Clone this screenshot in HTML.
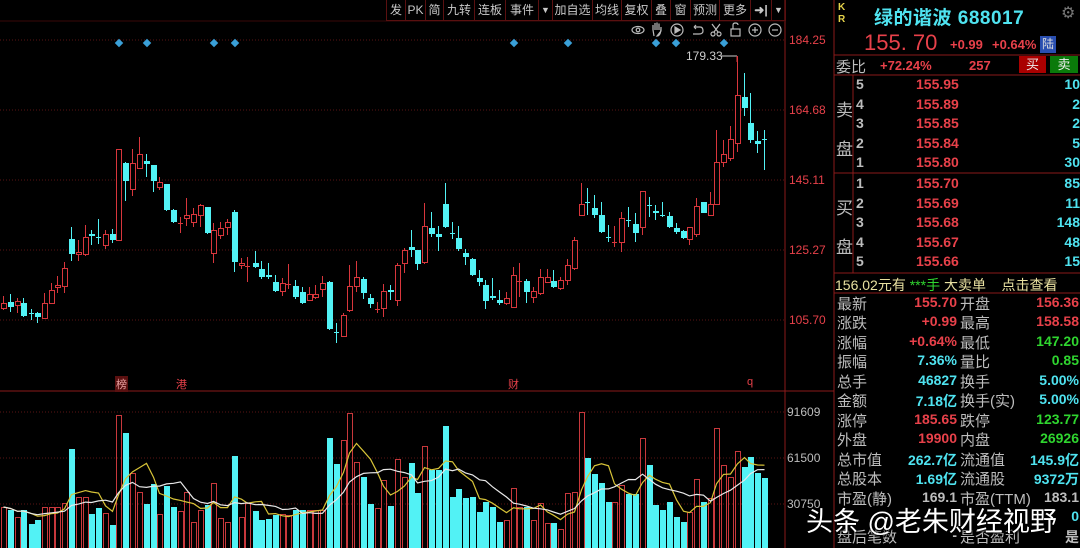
<!DOCTYPE html>
<html><head><meta charset="utf-8"><style>
*{margin:0;padding:0;box-sizing:border-box}
body{width:1080px;height:548px;background:#000;overflow:hidden;position:relative;font-family:"Liberation Sans","Noto Sans CJK SC",sans-serif;}
.a{position:absolute;white-space:nowrap}
.tb{position:absolute;top:0;height:21px;border-right:1px solid #5a1010;color:#c8c8c8;font-size:12px;line-height:21px;text-align:center}
.g{color:#bdbdbd}.r{color:#e8414a}.c{color:#4fe3f0}.gr{color:#2fd52f}
.n{font-weight:bold;font-size:14px}
</style></head><body>
<svg id="s" width="1080" height="548" style="position:absolute;left:0;top:0"></svg>

<div class="a" style="left:386px;top:0;width:400px;height:21px;border-left:1px solid #5a1010;border-bottom:1px solid #5a1010"></div>
<div class="tb" style="left:387px;width:19px">发</div>
<div class="tb" style="left:406px;width:20px">PK</div>
<div class="tb" style="left:426px;width:18px">简</div>
<div class="tb" style="left:444px;width:31px">九转</div>
<div class="tb" style="left:475px;width:31px">连板</div>
<div class="tb" style="left:506px;width:33px">事件</div>
<div class="tb" style="left:539px;width:14px;font-size:9px">▼</div>
<div class="tb" style="left:553px;width:40px">加自选</div>
<div class="tb" style="left:593px;width:29px">均线</div>
<div class="tb" style="left:622px;width:30px">复权</div>
<div class="tb" style="left:652px;width:19px">叠</div>
<div class="tb" style="left:671px;width:20px">窗</div>
<div class="tb" style="left:691px;width:29px">预测</div>
<div class="tb" style="left:720px;width:31px">更多</div>
<div class="tb" style="left:751px;width:21px;font-weight:bold">➜|</div>
<div class="tb" style="left:772px;width:14px;font-size:9px">▼</div>

<div class="a r" style="left:789px;top:33px;font-size:12px">184.25</div>
<div class="a r" style="left:789px;top:103px;font-size:12px">164.68</div>
<div class="a r" style="left:789px;top:173px;font-size:12px">145.11</div>
<div class="a r" style="left:789px;top:243px;font-size:12px">125.27</div>
<div class="a r" style="left:789px;top:313px;font-size:12px">105.70</div>
<div class="a g" style="left:787px;top:405px;font-size:12px">91609</div>
<div class="a g" style="left:787px;top:451px;font-size:12px">61500</div>
<div class="a g" style="left:787px;top:497px;font-size:12px">30750</div>
<div class="a" style="left:686px;top:49px;font-size:12px;color:#ccc">179.33</div>

<div class="a" style="left:115px;top:376px;font-size:11px;color:#e8a0a0;background:#5a1010;padding:0 1px">榜</div>
<div class="a r" style="left:176px;top:376px;font-size:11px">港</div>
<div class="a r" style="left:508px;top:376px;font-size:11px">财</div>
<div class="a r" style="left:747px;top:376px;font-size:11px">q</div>

<div class="a" style="left:838px;top:2px;color:#e6d34a;font-size:10px;font-weight:bold;line-height:12px">K<br>R</div>
<div class="a c" style="left:874px;top:3px;font-size:19px;font-weight:bold;letter-spacing:0.5px">绿的谐波 688017</div>
<div class="a" style="left:1061px;top:3px;color:#777;font-size:16px">⚙</div>
<div class="a r" style="left:864px;top:30px;font-size:22px">155. 70</div>
<div class="a r n" style="left:950px;top:37px;font-size:13px">+0.99</div>
<div class="a r n" style="left:992px;top:37px;font-size:13px">+0.64%</div>
<div class="a" style="left:1040px;top:36px;width:16px;height:17px;background:#2a4fb0;color:#ddd;font-size:12px;text-align:center;line-height:17px">陆</div>
<div class="a g" style="left:836px;top:56px;font-size:15px">委比</div>
<div class="a r n" style="left:880px;top:58px;font-size:13px">+72.24%</div>
<div class="a r n" style="left:969px;top:58px;font-size:13px">257</div>
<div class="a" style="left:1019px;top:56px;width:27px;height:17px;background:#a00;color:#eee;font-size:13px;text-align:center;line-height:17px">买</div>
<div class="a" style="left:1050px;top:56px;width:28px;height:17px;background:#0a7a0a;color:#eee;font-size:13px;text-align:center;line-height:17px">卖</div>
<div class="a g" style="left:836px;top:96px;font-size:17px">卖</div>
<div class="a g" style="left:836px;top:135px;font-size:17px">盘</div>
<div class="a g" style="left:836px;top:194px;font-size:17px">买</div>
<div class="a g" style="left:836px;top:233px;font-size:17px">盘</div>
<div id="book"></div>
<div class="a" style="left:835px;top:275px;font-size:14px;color:#e8e0a0">156.02元有 <span class="gr">***手</span> 大卖单 &nbsp;&nbsp; 点击查看</div>

<div class="a" style="left:806px;top:500px;font-size:27px;color:#fff;text-shadow:1px 1px 2px #000,0 0 3px #000">头条 @老朱财经视野</div>

<script>
const S=document.getElementById('s');let h='';
const R='#d8363c',C='#52f2f5';
h+=`<line x1="785" y1="0" x2="785" y2="548" stroke="#8a1a1a"/>`;
h+=`<line x1="834" y1="0" x2="834" y2="548" stroke="#8a1a1a"/>`;
h+=`<line x1="0" y1="391" x2="834" y2="391" stroke="#8a1a1a"/>`;
h+=`<line x1="0" y1="21" x2="785" y2="21" stroke="#3a0808"/>`;
[40,110,180,250,320,412,458,504].forEach(y=>h+=`<line x1="0" y1="${y}" x2="785" y2="${y}" stroke="#5a1414" stroke-dasharray="1 2"/>`);
[[834,55],[834,75],[853,173],[834,273],[834,293]].forEach(([x,y])=>h+=`<line x1="${x}" y1="${y}" x2="1080" y2="${y}" stroke="#8a1a1a"/>`);
h+=`<line x1="853" y1="75" x2="853" y2="273" stroke="#8a1a1a"/>`;
h+=`<line x1="834" y1="173" x2="1080" y2="173" stroke="#8a1a1a"/>`;
[119,147,214,235,514,568,656,676,724].forEach(x=>h+=`<rect x="${x-3}" y="40" width="6" height="6" fill="#3aa0d8" transform="rotate(45 ${x} 43)"/>`);
h+=`<line x1="721" y1="56" x2="737" y2="56" stroke="#ccc"/><line x1="737" y1="56" x2="737" y2="62" stroke="${R}"/>`;
const ic='#bbb';
h+=`<g fill="none" stroke="${ic}" stroke-width="1.2">
<ellipse cx="638" cy="30" rx="6" ry="3.5"/><circle cx="638" cy="30" r="1.8"/>
<path d="M654 36 L653 30 L653 25 M655 30 V23 M657 30 V22.5 M659 30 V23.5 M661 31 V27 Q661 36 657 36 Z"/>
<circle cx="677" cy="30" r="6"/><path d="M675 27 L680 30 L675 33 Z" fill="${ic}"/>
<path d="M694 27 H700 Q703 27 703 31 Q703 34 699 34 H693 M694 27 L696 25 M694 27 L696 29"/>
<circle cx="713" cy="34" r="2"/><circle cx="719" cy="34" r="2"/><path d="M714 32 L720 24 M718 32 L712 24"/>
<rect x="731" y="29" width="9" height="7"/><path d="M733 29 V25 Q733 23 735.5 23 Q738 23 738 25"/>
<circle cx="755" cy="30" r="6"/><path d="M752 30 H758 M755 27 V33"/>
<circle cx="775" cy="30" r="6"/><path d="M772 30 H778"/></g>`;
const K=[[3,'r',303,308,296,310],[10,'c',302,307,294,312],[17,'r',301,305,298,313],[23,'c',303,316,298,317],[31,'c',313,314,309,320],[37,'c',313,317,312,323],[44,'r',303,318,293,319],[51,'r',290,303,283,304],[57,'r',285,287,276,293],[64,'r',268,286,262,293],[71,'c',239,254,227,261],[78,'r',252,254,240,261],[85,'r',237,254,225,256],[91,'c',234,236,230,245],[98,'c',237,238,219,244],[105,'r',234,245,230,249],[112,'c',234,240,229,243],[118,'r',149,240,149,240],[125,'c',163,181,162,201],[132,'r',163,189,149,196],[139,'r',154,168,137,168],[146,'c',161,164,154,177],[153,'c',165,181,165,192],[159,'r',182,187,177,190],[166,'c',184,210,184,211],[173,'c',210,222,209,223],[180,'r',223,224,217,233],[186,'r',215,218,198,226],[193,'r',214,222,208,227],[200,'r',205,215,204,227],[207,'c',207,233,207,234],[213,'r',230,253,223,263],[220,'r',228,235,222,239],[227,'r',222,227,219,235],[234,'c',212,262,210,272],[241,'r',263,265,258,269],[247,'r',266,267,257,282],[255,'c',263,267,251,268],[261,'c',269,277,261,279],[268,'c',275,277,263,279],[275,'c',282,291,275,292],[282,'r',283,291,278,296],[288,'r',284,285,264,289],[295,'c',286,297,280,299],[302,'c',292,303,287,304],[309,'r',294,300,287,301],[315,'r',294,297,285,299],[322,'r',283,289,276,297],[329,'c',282,329,281,330],[336,'c',332,333,323,343],[343,'r',315,336,313,337],[349,'r',286,310,265,312],[356,'r',277,286,261,292],[363,'c',279,293,277,299],[370,'c',298,304,294,308],[377,'r',309,310,302,313],[383,'r',291,308,284,317],[390,'c',290,292,285,300],[397,'r',265,300,263,306],
[404,'r',250,263,248,273],[411,'c',247,250,230,257],[417,'c',250,264,250,270],[424,'r',226,262,203,264],[431,'c',228,234,212,237],[438,'c',234,237,226,251],[445,'c',204,227,183,228],[452,'c',233,234,222,239],[458,'c',238,249,226,251],[465,'c',253,257,249,265],[472,'c',259,275,258,276],[479,'c',278,282,270,286],[485,'c',285,301,280,309],[492,'c',296,298,278,300],[499,'c',300,303,290,305],[506,'r',298,303,292,305],[513,'r',275,307,267,307],[519,'r',281,282,263,297],[526,'c',281,292,279,303],[533,'r',291,297,287,303],[540,'r',277,293,269,295],[547,'r',277,282,269,283],[553,'c',281,287,270,288],[560,'r',280,288,277,290],[567,'r',265,280,259,285],[574,'r',240,268,237,270],[581,'r',204,215,183,215],[587,'c',202,203,188,215],[594,'c',208,215,195,218],[601,'c',215,232,202,233],[608,'c',237,238,225,242],[614,'r',242,243,226,247],[621,'r',218,242,212,252],[628,'c',220,221,207,227],[635,'c',224,233,213,242],[642,'r',191,227,191,235],[649,'c',205,206,197,217],[655,'c',211,213,205,220],[662,'c',215,216,202,217],[669,'c',216,227,212,228],[676,'c',228,232,223,234],[683,'c',231,238,230,239],[689,'r',227,239,227,245],[696,'r',206,234,198,237],[703,'c',202,213,202,213],[710,'r',204,215,192,216],[716,'r',162,204,130,204],[723,'r',154,162,140,167],[730,'r',139,158,126,161],[737,'r',95,143,56,152],[744,'c',97,108,73,116],[750,'c',123,140,93,143],[757,'c',141,144,131,153],[764,'c',139,140,130,170]];
const V=[507,510,517,510,524,520,507,507,507,503,449,497,497,514,508,513,525,415,433,473,492,504,484,514,486,507,511,492,522,510,505,483,518,522,456,517,503,511,520,519,515,514,515,510,510,510,510,510,438,464,440,413,462,477,504,508,480,506,459,477,463,493,446,470,470,426,497,489,498,497,512,502,507,522,520,488,507,507,520,503,523,523,529,493,492,412,458,474,483,502,502,485,494,494,438,465,505,510,502,517,522,512,479,502,498,428,465,477,451,467,457,473,478];
let vol='',cand='';
K.forEach((k,i)=>{const [x,t,a,b,hi,lo]=k;const col=t=='r'?R:C;
 cand+=`<line x1="${x+.5}" y1="${hi}" x2="${x+.5}" y2="${lo}" stroke="${col}"/>`;
 if(b-a<2) cand+=`<line x1="${x-2}" y1="${a+.5}" x2="${x+3}" y2="${a+.5}" stroke="${col}"/>`;
 else if(t=='r') cand+=`<rect x="${x-1.5}" y="${a+.5}" width="5" height="${b-a}" fill="#000" stroke="${col}"/>`;
 else cand+=`<rect x="${x-2}" y="${a}" width="6" height="${b-a}" fill="${col}"/>`;
 const v=V[i]||510;
 if(t=='r') vol+=`<rect x="${x-1.5}" y="${v+.5}" width="5" height="${548-v}" fill="none" stroke="#c8383c"/>`;
 else vol+=`<rect x="${x-2}" y="${v}" width="6" height="${548-v}" fill="${col}"/>`;
});
h+=cand+vol;
function ma(n,col){let p=[];for(let i=0;i<K.length;i++){let s=0,c=0;for(let j=Math.max(0,i-n+1);j<=i;j++){s+=548-V[j];c++}p.push(K[i][0]+.5+','+(548-s/c).toFixed(1))}h+=`<polyline points="${p.join(' ')}" fill="none" stroke="${col}" stroke-width="1.2"/>`}
ma(5,'#d8c438');ma(10,'#e8e8e8');
S.innerHTML=h;
const sell=[['5','155.95','10'],['4','155.89','2'],['3','155.85','2'],['2','155.84','5'],['1','155.80','30']];
const buy=[['1','155.70','85'],['2','155.69','11'],['3','155.68','148'],['4','155.67','48'],['5','155.66','15']];
let b='';
function row(r,y){b+=`<div class="a g n" style="left:856px;top:${y}px">${r[0]}</div><div class="a r n" style="left:916px;top:${y}px">${r[1]}</div><div class="a c n" style="right:0;top:${y}px">${r[2]}</div>`}
sell.forEach((r,i)=>row(r,76+i*19.5));buy.forEach((r,i)=>row(r,175+i*19.5));
const info=[['最新','155.70','r','开盘','156.36','r'],['涨跌','+0.99','r','最高','158.58','r'],['涨幅','+0.64%','r','最低','147.20','gr'],['振幅','7.36%','c','量比','0.85','gr'],['总手','46827','c','换手','5.00%','c'],['金额','7.18亿','c','换手(实)','5.00%','c'],['涨停','185.65','r','跌停','123.77','gr'],['外盘','19900','r','内盘','26926','gr'],['总市值','262.7亿','c','流通值','145.9亿','c'],['总股本','1.69亿','c','流通股','9372万','c'],['市盈(静)','169.1','g','市盈(TTM)','183.1','g'],['','','g','','0','c'],['盘后笔数','-','g','是否盈利','是','g']];
info.forEach((r,i)=>{const y=293+i*19.45;
 b+=`<div class="a g" style="left:837px;top:${y}px;font-size:15px">${r[0]}</div><div class="a ${r[2]} n" style="right:123px;top:${y+1}px">${r[1]}</div><div class="a g" style="left:960px;top:${y}px;font-size:15px">${r[3]}</div><div class="a ${r[5]} n" style="right:1px;top:${y+1}px">${r[4]}</div>`});
document.getElementById('book').innerHTML=b;
</script>
</body></html>
